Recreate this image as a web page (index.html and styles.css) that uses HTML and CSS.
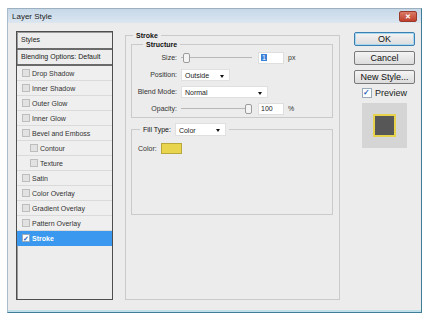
FILE: index.html
```html
<!DOCTYPE html>
<html lang="en">
<head>
  <meta charset="UTF-8">
  <title>Layer Style</title>
  <link rel="stylesheet" href="styles.css">
</head>
<body>

  <div class="window">
    <div class="titlebar">
      <span class="title">Layer Style</span>
      <span class="close">✕</span>
    </div>

    <div class="content">
      <!-- styles list -->
      <div class="list">
        <div class="list-head">Styles</div>
        <div class="list-blend">Blending Options: Default</div>
        <div class="item"><span class="cb"></span>Drop Shadow</div>
        <div class="item"><span class="cb"></span>Inner Shadow</div>
        <div class="item"><span class="cb"></span>Outer Glow</div>
        <div class="item"><span class="cb"></span>Inner Glow</div>
        <div class="item"><span class="cb"></span>Bevel and Emboss</div>
        <div class="item sub"><span class="cb"></span>Contour</div>
        <div class="item sub"><span class="cb"></span>Texture</div>
        <div class="item"><span class="cb"></span>Satin</div>
        <div class="item"><span class="cb"></span>Color Overlay</div>
        <div class="item"><span class="cb"></span>Gradient Overlay</div>
        <div class="item"><span class="cb"></span>Pattern Overlay</div>
        <div class="item selected"><span class="cb checked">✓</span>Stroke</div>
      </div>

      <!-- stroke settings -->
      <fieldset class="group stroke">
        <legend>Stroke</legend>
        <div class="stroke-inner">

          <fieldset class="group structure">
            <legend>Structure</legend>
            <div class="rows">
              <div class="row">
                <span class="lbl">Size:</span>
                <div class="slider"><span class="thumb"></span></div>
                <div class="num"><span class="sel">1</span></div>
                <span class="unit">px</span>
              </div>
              <div class="row">
                <span class="lbl">Position:</span>
                <div class="select w-pos">Outside<span class="arrow"></span></div>
              </div>
              <div class="row">
                <span class="lbl">Blend Mode:</span>
                <div class="select w-blend">Normal<span class="arrow"></span></div>
              </div>
              <div class="row">
                <span class="lbl">Opacity:</span>
                <div class="slider"><span class="thumb end"></span></div>
                <div class="num">100</div>
                <span class="unit">%</span>
              </div>
            </div>
          </fieldset>

          <fieldset class="group fill">
            <legend><span>Fill Type:</span><div class="select w-fill">Color<span class="arrow"></span></div></legend>
            <div class="fill-inner">
              <span>Color:</span>
              <span class="swatch"></span>
            </div>
          </fieldset>

        </div>
      </fieldset>

      <!-- buttons -->
      <div class="side">
        <button class="btn default">OK</button>
        <button class="btn">Cancel</button>
        <button class="btn">New Style...</button>
        <div class="preview-row"><span class="cb checked big">✓</span>Preview</div>
        <div class="preview-box"><span class="preview-square"></span></div>
      </div>
    </div>
  </div>

</body>
</html>
```

FILE: styles.css
```css
body { margin: 0; padding: 8px 0 0 7px; background: #fff; font-family: "Liberation Sans", Arial, sans-serif; font-size: 7px; color: #222; }

.window { width: 413px; height: 303px; background: #ececec; border: 1px solid; border-color: #9db0c0 #3f7d96 #3f7d96 #a9bccb; box-shadow: inset 0 -2px 0 #bfe0ea, inset 0 -7px 0 -5px #f8f8f8; }
.titlebar { height: 14px; display: flex; align-items: center; justify-content: space-between; padding: 0 4px 0 4px; background: linear-gradient(#c6d8e8, #dbe6f0); }
.title { font-size: 8px; color: #1c1c1c; }
.close { width: 16px; height: 9px; background: linear-gradient(#d97a66, #c0402c); color: #fff; font-size: 7px; line-height: 9px; text-align: center; border-radius: 2px; border: 1px solid #9a3a2a; font-weight: bold; }

.content { display: flex; align-items: flex-start; padding: 8px 0 0 8px; }

/* list on the left */
.list { width: 95px; height: 267px; border: 1px solid #4e4e4e; box-shadow: inset 1px 1px 0 #9a9a9a; background: #ededed; }
.list-head { height: 16px; line-height: 16px; padding-left: 4px; border-bottom: 2px solid #6a6a6a; }
.list-blend { height: 14px; line-height: 14px; padding-left: 4px; border-bottom: 2px solid #6a6a6a; }
.item { height: 14px; display: flex; align-items: center; gap: 2px; padding-left: 5px; border-bottom: 1px solid #dadada; background: #efefef; color: #333; }
.item.sub { padding-left: 13px; }
.item.selected { background: #3a98ee; color: #fff; font-weight: bold; border-bottom-color: #3a98ee; }
.cb { width: 6px; height: 6px; border: 1px solid #bdbdbd; background: #e2e2e2; display: inline-flex; align-items: center; justify-content: center; font-size: 7px; line-height: 1; }
.cb.checked { background: #fff; color: #1d5fb8; border-color: #9ab; font-weight: bold; }
.cb.big { width: 8px; height: 8px; font-size: 8px; }

/* group boxes */
.group { margin: 0; padding: 0; border: 1px solid #cacaca; min-width: 0; }
.group legend { padding: 0 3px; font-weight: bold; line-height: 9px; color: #111; }
.stroke { width: 213px; margin-left: 12px; }
.stroke > legend { margin-left: 7px; }
.stroke-inner { height: 259px; padding: 0 6px 0 5px; }
.structure > legend { margin-left: 11px; }
.rows { display: flex; flex-direction: column; }
.row { height: 17px; display: flex; align-items: center; }
.lbl { width: 45px; text-align: right; margin-right: 4px; color: #333; }

.slider { position: relative; width: 71px; height: 1px; background: #b8b8b8; margin-right: 6px; }
.thumb { position: absolute; left: 2px; top: -4px; width: 5px; height: 8px; background: #f4f4f4; border: 1px solid #9c9c9c; border-radius: 2px; }
.thumb.end { left: auto; right: 0; }
.num { width: 22px; height: 10px; line-height: 10px; background: #fff; border: 1px solid #dedede; padding-left: 2px; margin-right: 4px; }
.sel { background: #3a7fd8; color: #fff; padding: 0 1px; }
.unit { color: #333; }

.select { position: relative; height: 12px; line-height: 12px; background: #fff; border: 1px solid #e0e0e0; padding-left: 3px; box-sizing: border-box; color: #222; font-weight: normal; }
.arrow { position: absolute; right: 5px; top: 5px; border-left: 2.5px solid transparent; border-right: 2.5px solid transparent; border-top: 3px solid #111; }
.w-pos { width: 49px; }
.w-blend { width: 87px; }
.w-fill { width: 51px; height: 13px; line-height: 13px; margin-left: 4px; }

.fill { margin-top: 5px; }
.fill > legend { margin-left: 8px; display: flex; align-items: center; font-weight: normal; line-height: 13px; }
.fill-inner { height: 71px; display: flex; align-items: flex-start; gap: 4px; padding: 7px 0 0 6px; color: #333; }
.fill-inner span:first-child { line-height: 11px; }
.swatch { width: 19px; height: 9px; background: #e9d54d; border: 1px solid #b9a93c; }

/* buttons on the right */
.side { width: 61px; margin-left: 14px; margin-top: 1px; display: flex; flex-direction: column; align-items: center; gap: 5px; }
.btn { width: 61px; height: 14px; padding: 0; font-family: "Liberation Sans", Arial, sans-serif; font-size: 9px; color: #111; background: linear-gradient(#f4f4f4, #dcdcdc); border: 1px solid #7a7a7a; border-radius: 2px; }
.btn.default { border-color: #3c7fb1; box-shadow: inset 0 0 0 1px #a8d8f0; }
.preview-row { display: flex; align-items: center; gap: 3px; font-size: 9px; height: 10px; margin-top: -1px; }
.preview-box { width: 45px; height: 45px; margin-top: 0; background: #d5d5d5; display: flex; align-items: center; justify-content: center; }
.preview-square { width: 19px; height: 19px; background: #575757; border: 2px solid #e6d24c; }
```
